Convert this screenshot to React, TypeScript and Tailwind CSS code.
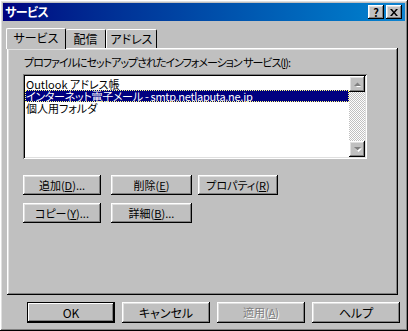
import React from "react";

const raised =
  "shadow-[inset_-1px_-1px_#000,inset_1px_1px_#fff,inset_-2px_-2px_#808080,inset_2px_2px_#dfdfdf]";
const sunken =
  "shadow-[inset_1px_1px_#808080,inset_-1px_-1px_#fff,inset_2px_2px_#000,inset_-2px_-2px_#dfdfdf]";

const Btn = ({
  children,
  className = "",
  disabled = false,
  isDefault = false,
}: {
  children: React.ReactNode;
  className?: string;
  disabled?: boolean;
  isDefault?: boolean;
}) => (
  <div
    className={`flex items-center justify-center bg-[#c0c0c0] leading-none ${
      isDefault
        ? "shadow-[inset_0_0_0_1px_#000,inset_-2px_-2px_#000,inset_2px_2px_#fff,inset_-3px_-3px_#808080]"
        : raised
    } ${disabled ? "text-[#808080] [text-shadow:1px_1px_#fff]" : "text-black"} ${className}`}
  >
    {children}
  </div>
);

const ScrollArrow = ({ up }: { up?: boolean }) => (
  <div className={`w-4 h-4 bg-[#c0c0c0] flex items-center justify-center ${raised}`}>
    <svg width="9" height="5" viewBox="0 0 9 5">
      {up ? (
        <>
          <polygon points="1,5 8,5 4.5,1.5" fill="#fff" transform="translate(1,1)" />
          <polygon points="1,4 8,4 4.5,0.5" fill="#808080" />
        </>
      ) : (
        <>
          <polygon points="1,1 8,1 4.5,4.5" fill="#fff" transform="translate(1,0.5)" />
          <polygon points="1,0 8,0 4.5,3.5" fill="#808080" />
        </>
      )}
    </svg>
  </div>
);

export default function App() {
  const font = "font-['Noto_Sans_CJK_JP','Liberation_Sans',sans-serif] [font-feature-settings:'palt']";
  return (
    <div className={`w-[408px] h-[331px] bg-[#c0c0c0] p-[3px] flex flex-col ${raised} ${font}`}>
      {/* title bar */}
      <div className="h-[18px] flex items-center justify-between bg-gradient-to-r from-[#000080] to-[#1084d0] pl-[2px] pr-[3px]">
        <span className="text-white font-bold text-[12px] leading-none tracking-[-0.5px]">サービス</span>
        <div className="flex items-center">
          <div className={`w-4 h-[14px] bg-[#c0c0c0] flex items-center justify-center text-[11px] font-bold leading-none ${raised}`}>
            ?
          </div>
          <div className={`ml-[2px] w-4 h-[14px] bg-[#c0c0c0] flex items-center justify-center ${raised}`}>
            <svg width="8" height="7" viewBox="0 0 8 7">
              <path d="M0 0h2l2 2.5L6 0h2L5 3.5 8 7H6L4 4.5 2 7H0l3-3.5z" fill="#000" />
            </svg>
          </div>
        </div>
      </div>

      {/* tabs */}
      <div className="mt-[6px] ml-[3px] flex items-end relative z-10 h-[21px]">
        <div className="h-[21px] w-[60px] -mb-[1px] bg-[#c0c0c0] border-l border-t border-white border-r border-r-black rounded-t-[2px] flex items-start justify-center pt-[3px] text-[12px] leading-none">
          サービス
        </div>
        <div className="h-[19px] w-[40px] bg-[#c0c0c0] border-t border-white border-r border-r-black rounded-t-[2px] flex items-start justify-center pt-[3px] text-[12px] leading-none">
          配信
        </div>
        <div className="h-[19px] w-[51px] bg-[#c0c0c0] border-l border-t border-white border-r border-r-black rounded-t-[2px] flex items-start justify-center pt-[3px] text-[12px] leading-none">
          アドレス
        </div>
      </div>

      {/* panel */}
      <div className={`ml-[4px] w-[391px] h-[247px] ${raised} px-[16px] pt-[9px] flex flex-col`}>
        <div className="text-[11px] leading-none ml-[1px] h-[12px] tracking-[-1px]">
          プロファイルにセットアップされたインフォメーション サービス(<u>I</u>):
        </div>
        <div className={`mt-[5px] w-[344px] h-[85px] bg-white ${sunken} p-[2px] flex`}>
          <div className="flex-1 pt-[2px] text-[11px] leading-[12px]">
            <div className="h-[12px] pl-[1px]">Outlook アドレス帳</div>
            <div className="h-[12px] pl-[1px] bg-[#000080] text-white tracking-[-0.3px] outline-1 outline-dotted outline-[#ffff80] -outline-offset-1">
              インターネット電子メール - smtp.netlaputa.ne.jp
            </div>
            <div className="h-[12px] pl-[1px]">個人用フォルダ</div>
          </div>
          <div className="w-4 flex flex-col justify-between bg-[repeating-conic-gradient(#c0c0c0_0_25%,#fff_0_50%)] bg-[length:2px_2px]">
            <ScrollArrow up />
            <ScrollArrow />
          </div>
        </div>

        <div className="mt-[16px] flex text-[11px]">
          <Btn className="w-[78px] h-[20px]">
            追加(<u>D</u>)...
          </Btn>
          <Btn className="ml-[10px] w-[81px] h-[20px]">
            削除(<u>E</u>)
          </Btn>
          <Btn className="ml-[6px] w-[80px] h-[20px]">
            プロパティ(<u>R</u>)
          </Btn>
        </div>
        <div className="mt-[8px] flex text-[11px]">
          <Btn className="w-[78px] h-[20px]">
            コピー(<u>Y</u>)...
          </Btn>
          <Btn className="ml-[10px] w-[81px] h-[20px]">
            詳細(<u>B</u>)...
          </Btn>
        </div>
      </div>

      {/* bottom buttons */}
      <div className="mt-[7px] ml-[24px] flex gap-[7px] text-[12px]">
        <Btn isDefault className="w-[88px] h-[21px]">
          OK
        </Btn>
        <Btn className="w-[88px] h-[21px]">キャンセル</Btn>
        <Btn disabled className="w-[88px] h-[21px] text-[11px]">
          適用(<u>A</u>)
        </Btn>
        <Btn className="w-[88px] h-[21px]">ヘルプ</Btn>
      </div>
    </div>
  );
}
